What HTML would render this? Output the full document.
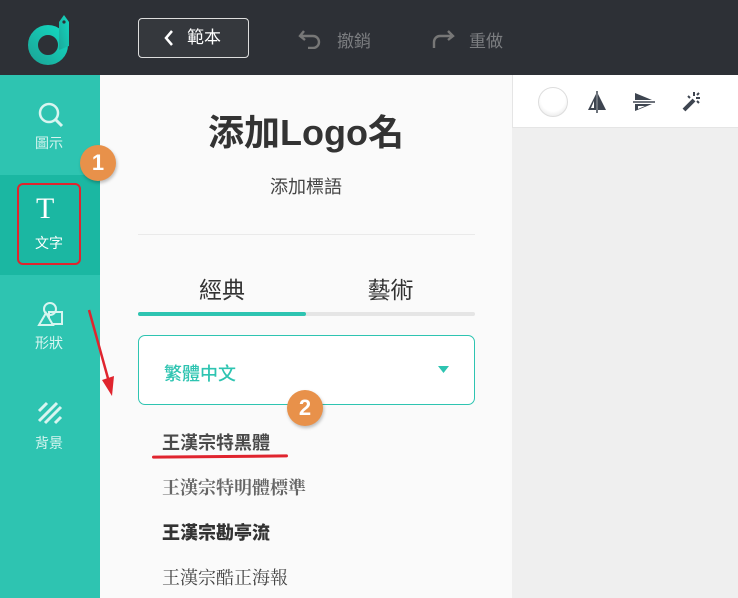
<!DOCTYPE html>
<html><head><meta charset="utf-8"><style>
*{margin:0;padding:0;box-sizing:border-box}
body{width:738px;height:598px;overflow:hidden;position:relative;background:#efefef;font-family:"Liberation Sans","Noto Sans CJK TC",sans-serif}
.abs{position:absolute}
</style></head><body>
<div class="abs" style="left:0;top:0;width:738px;height:75px;background:#2d3036"></div>
<svg class="abs" style="left:24px;top:10px" width="54" height="56" viewBox="0 0 54 56">
<defs><linearGradient id="g" x1="0" y1="1" x2="1" y2="0"><stop offset="0" stop-color="#1ba99a"/><stop offset="1" stop-color="#13d6bf"/></linearGradient></defs>
<circle cx="24" cy="35" r="15" fill="none" stroke="url(#g)" stroke-width="10"/>
<path d="M35 40 V12 l5-7 5 7 V36" fill="url(#g)"/>
<circle cx="40" cy="12" r="1.6" fill="#2d3036"/>
</svg>
<div class="abs" style="left:138px;top:18px;width:111px;height:40px;border:1px solid #ddd;border-radius:4px;background:#35383d;color:#fff;font-size:17px;line-height:38px;padding-left:48px">範本</div>
<svg class="abs" style="left:162px;top:29px" width="14" height="18"><path d="M10 2 L4 9 L10 16" fill="none" stroke="#fff" stroke-width="2.5"/></svg>
<svg class="abs" style="left:298px;top:27px" width="26" height="22"><path d="M6 4 L2 9 L7 13 M2 9 H15 a6 6 0 0 1 0 12 H10" fill="none" stroke="#777" stroke-width="2.4"/></svg>
<div class="abs" style="left:337px;top:27px;color:#7b7d80;font-size:17px">撤銷</div>
<svg class="abs" style="left:430px;top:27px" width="26" height="22"><path d="M18 4 L23 9 L18 13 M23 9 H10 a6 6 0 0 0 -6 6 V21" fill="none" stroke="#777" stroke-width="2.4"/></svg>
<div class="abs" style="left:469px;top:27px;color:#7b7d80;font-size:17px">重做</div>

<div class="abs" style="left:0;top:75px;width:100px;height:523px;background:#2ec4b1"></div>
<div class="abs" style="left:0;top:175px;width:100px;height:100px;background:#1bb7a2"></div>
<svg class="abs" style="left:37px;top:101px" width="28" height="28"><circle cx="12" cy="12" r="9" fill="none" stroke="#d8f5f0" stroke-width="2.5"/><path d="M19 19 L25 25" stroke="#d8f5f0" stroke-width="3"/></svg>
<div class="abs" style="left:35px;top:133px;color:#d8f5f0;font-size:14px">圖示</div>
<div class="abs" style="left:17px;top:183px;width:64px;height:82px;border:2px solid #e0242e;border-radius:6px"></div>
<div class="abs" style="left:36px;top:194px;color:#fff;font-size:30px;font-family:'Liberation Serif',serif;line-height:30px">T</div>
<div class="abs" style="left:35px;top:233px;color:#fff;font-size:14px">文字</div>
<svg class="abs" style="left:36px;top:300px" width="30" height="30"><circle cx="14" cy="9" r="6" fill="none" stroke="#d8f5f0" stroke-width="2"/><rect x="13" y="12" width="13" height="12" fill="none" stroke="#d8f5f0" stroke-width="2"/><path d="M3 25 L10 13 L17 25 Z" fill="#2ec4b1" stroke="#d8f5f0" stroke-width="2"/></svg>
<div class="abs" style="left:35px;top:333px;color:#d8f5f0;font-size:14px">形狀</div>
<svg class="abs" style="left:37px;top:401px" width="26" height="24"><path d="M2 10 L10 2 M2 20 L20 2 M8 22 L24 6 M18 22 L24 16" stroke="#d8f5f0" stroke-width="3"/></svg>
<div class="abs" style="left:35px;top:433px;color:#d8f5f0;font-size:14px">背景</div>

<div class="abs" style="left:100px;top:75px;width:412px;height:523px;background:#fafafa"></div>
<div class="abs" style="left:100px;top:104px;width:412px;text-align:center;color:#333;font-size:36px;font-weight:bold">添加Logo名</div>
<div class="abs" style="left:100px;top:173px;width:412px;text-align:center;color:#444;font-size:18px">添加標語</div>
<div class="abs" style="left:138px;top:234px;width:337px;height:1px;background:#eaeaea"></div>
<div class="abs" style="left:138px;top:271px;width:168px;text-align:center;color:#333;font-size:23px">經典</div>
<div class="abs" style="left:306px;top:271px;width:169px;text-align:center;color:#333;font-size:23px">藝術</div>
<div class="abs" style="left:138px;top:312px;width:337px;height:4px;background:#e5e5e5;border-radius:2px"></div>
<div class="abs" style="left:138px;top:312px;width:168px;height:4px;background:#2ec4b1;border-radius:2px"></div>
<div class="abs" style="left:138px;top:335px;width:337px;height:70px;border:1px solid #2ec4b1;border-radius:7px;background:#fff"></div>
<div class="abs" style="left:164px;top:360px;color:#2ec4b1;font-size:18px;font-weight:500;font-family:'Noto Sans CJK TC',sans-serif">繁體中文</div>
<svg class="abs" style="left:438px;top:366px" width="12" height="8"><path d="M0 0 H11 L5.5 7Z" fill="#2ec4b1"/></svg>
<div class="abs" style="left:162px;top:429px;color:#4a4a4a;font-size:18px;font-weight:bold;font-family:'Noto Sans CJK TC',sans-serif">王漢宗特黑體</div>
<div class="abs" style="left:152px;top:455px;width:136px;height:3px;background:#e0242e;border-radius:2px;transform:rotate(-0.5deg)"></div>
<div class="abs" style="left:162px;top:474px;color:#666;font-size:18px;font-weight:bold;font-family:'Noto Serif CJK SC',serif">王漢宗特明體標準</div>
<div class="abs" style="left:162px;top:519px;color:#333;font-size:18px;font-weight:900;font-family:'Noto Sans CJK TC',sans-serif">王漢宗勘亭流</div>
<div class="abs" style="left:162px;top:564px;color:#444;font-size:18px;font-family:'Noto Serif CJK SC',serif">王漢宗酷正海報</div>

<div class="abs" style="left:512px;top:75px;width:226px;height:53px;background:#fff;border-bottom:1px solid #e5e5e5;border-left:1px solid #e5e5e5"></div>
<div class="abs" style="left:538px;top:87px;width:30px;height:30px;border-radius:50%;background:radial-gradient(circle at 50% 40%,#fff 55%,#ddd);border:1px solid #ddd"></div>
<svg class="abs" style="left:585px;top:89px" width="24" height="26"><path d="M11 5 L3 21 H11Z M13 5 L21 21 H13Z" fill="#3e4550"/><path d="M12 2V24" stroke="#3e4550" stroke-width="1.5"/><path d="M9 12 L6 19 H9Z" fill="#fff"/></svg>
<svg class="abs" style="left:632px;top:90px" width="24" height="24"><path d="M3 3 L20 10 H3Z M3 14 H20 L3 21Z" fill="#3e4550"/><path d="M1 12H23" stroke="#3e4550" stroke-width="1.5"/><path d="M6 16 H13 L6 19Z" fill="#fff"/></svg>
<svg class="abs" style="left:680px;top:90px" width="24" height="24"><path d="M4 20 L14 10" stroke="#3e4550" stroke-width="4"/><path d="M14 2V6 M20 8H16 M19 3 L17 5 M8 6 L10 8 M19 13 L17 11" stroke="#3e4550" stroke-width="2"/></svg>

<div class="abs" style="left:80px;top:145px;width:36px;height:36px;border-radius:50%;background:#e8914a;color:#fff;font-size:22px;font-weight:bold;text-align:center;line-height:36px;box-shadow:1px 2px 3px rgba(0,0,0,.25)">1</div>
<div class="abs" style="left:287px;top:390px;width:36px;height:36px;border-radius:50%;background:#e8914a;color:#fff;font-size:22px;font-weight:bold;text-align:center;line-height:36px;box-shadow:1px 2px 3px rgba(0,0,0,.25)">2</div>
<svg class="abs" style="left:80px;top:300px" width="50" height="105"><path d="M9 10 L29 82" stroke="#e0242e" stroke-width="2.5"/><path d="M22 80 L34 76 L32 96Z" fill="#e0242e"/></svg>
</body></html>
